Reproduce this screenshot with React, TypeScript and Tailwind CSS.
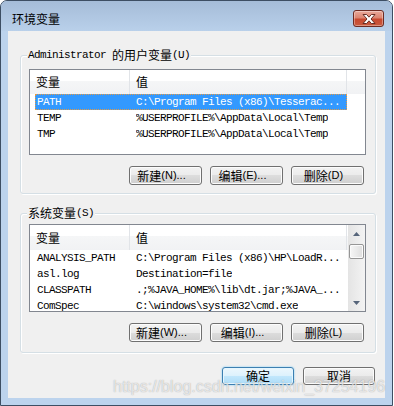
const MONO = "font-['Liberation_Mono',monospace] text-[11px] tracking-[-0.6px] leading-none";
const CJK = "font-['Noto_Sans_CJK_SC',sans-serif] text-[12px] leading-none";
const SANS = "font-['Liberation_Sans',sans-serif] text-[11px] leading-none";

type Row = [string, string];

const userVars: Row[] = [
  ['PATH', 'C:\\Program Files (x86)\\Tesserac...'],
  ['TEMP', '%USERPROFILE%\\AppData\\Local\\Temp'],
  ['TMP', '%USERPROFILE%\\AppData\\Local\\Temp'],
];

const sysVars: Row[] = [
  ['ANALYSIS_PATH', 'C:\\Program Files (x86)\\HP\\LoadR...'],
  ['asl.log', 'Destination=file'],
  ['CLASSPATH', '.;%JAVA_HOME%\\lib\\dt.jar;%JAVA_...'],
  ['ComSpec', 'C:\\windows\\system32\\cmd.exe'],
];

function CloseButton() {
  return (
    <div className="mt-[9px] w-[31px] h-[17px] rounded-[3px] border border-[#6e2b22] bg-[linear-gradient(to_bottom,#e9a99b_0%,#dc8571_45%,#c8482f_55%,#c95a3e_100%)] shadow-[inset_0_0_0_1px_rgba(255,255,255,0.35)] flex items-center justify-center">
      <svg width="14" height="10" viewBox="0 0 14 10">
        <polygon
          points="1,0.5 4.6,0.5 7,3.2 9.4,0.5 13,0.5 9,5 13,9.5 9.4,9.5 7,6.8 4.6,9.5 1,9.5 5,5"
          fill="#ffffff"
          stroke="#5a2119"
          strokeWidth="0.9"
          strokeLinejoin="round"
        />
      </svg>
    </div>
  );
}

function Scrollbar() {
  return (
    <div className="w-[17px] shrink-0 flex flex-col bg-[linear-gradient(to_right,#e4e4e4,#f3f3f3)]">
      <div className="h-[17px] shrink-0 flex items-center justify-center">
        <svg width="7" height="4" viewBox="0 0 7 4">
          <path d="M3.5 0L7 4H0z" fill="#56657a" />
        </svg>
      </div>
      <div className="mt-[2px] mx-[1px] h-[15px] shrink-0 rounded-[2px] border border-[#969696] bg-[linear-gradient(to_right,#f6f6f6,#dedede)] shadow-[inset_0_0_0_1px_#fbfbfb]" />
      <div className="flex-1" />
      <div className="h-[17px] shrink-0 flex items-center justify-center">
        <svg width="7" height="4" viewBox="0 0 7 4">
          <path d="M0 0H7L3.5 4z" fill="#56657a" />
        </svg>
      </div>
    </div>
  );
}

function ListView({
  rows,
  selected,
  scroll,
  height,
  headH,
}: {
  rows: Row[];
  selected?: number;
  scroll?: boolean;
  height: string;
  headH: string;
}) {
  return (
    <div className={`w-full ${height} flex border border-[#828790] bg-white overflow-hidden`}>
      <div className="flex-1 min-w-0 flex flex-col">
        <div className={`${headH} shrink-0 flex bg-[linear-gradient(to_bottom,#ffffff_0%,#ffffff_45%,#f5f6f7_45%,#f1f2f4_100%)]`}>
          <div className={`w-[100px] shrink-0 border-r border-[#e1e4e8] pl-[6px] flex items-center ${CJK}`}>变量</div>
          <div className={`w-[217px] shrink-0 border-r border-[#e1e4e8] pl-[6px] flex items-center ${CJK}`}>值</div>
        </div>
        {rows.map(([name, value], i) => (
          <div
            key={name}
            className={`ml-[5px] w-[312px] h-[16px] shrink-0 flex items-center whitespace-nowrap ${MONO} ${
              i === selected
                ? 'bg-[#3399ff] text-white outline-1 outline-dotted outline-[#e39a45] -outline-offset-1'
                : 'text-black'
            }`}
          >
            <span className="w-[101px] shrink-0 pl-[2px]">{name}</span>
            <span className="overflow-hidden">{value}</span>
          </div>
        ))}
      </div>
      {scroll && <Scrollbar />}
    </div>
  );
}

function Btn({
  zh,
  hot,
  dots,
  focused,
  w = 'w-[73px]',
  h = 'h-[19px]',
}: {
  zh: string;
  hot?: string;
  dots?: boolean;
  focused?: boolean;
  w?: string;
  h?: string;
}) {
  const look = focused
    ? 'border-[#3c7fb1] bg-[linear-gradient(to_bottom,#ecf7fd_0%,#dcf1fc_50%,#c2e7fc_50%,#aedcf6_100%)] shadow-[0_0_2px_#6fc8f8,inset_0_0_0_1px_#e6f6fe]'
    : 'border-[#707070] bg-[linear-gradient(to_bottom,#f3f3f3_0%,#ebebeb_50%,#dddddd_50%,#cfcfcf_100%)] shadow-[inset_0_0_0_1px_#fcfcfc]';
  return (
    <div className={`${w} ${h} shrink-0 rounded-[3px] border flex items-center justify-center ${hot ? 'pr-[8px]' : ''} ${look}`}>
      <span className={`${CJK} text-black`}>{zh}</span>
      {hot && (
        <span className={`${SANS} text-black`}>
          ({hot}){dots ? '...' : ''}
        </span>
      )}
    </div>
  );
}

function Group({
  label,
  height,
  pt,
  children,
}: {
  label: React.ReactNode;
  height: string;
  pt: string;
  children: React.ReactNode;
}) {
  return (
    <div
      className={`relative ml-[12px] w-[356px] ${height} ${pt} shrink-0 rounded-[3px] border border-[#d5dfe5] shadow-[inset_1px_1px_0_#ffffff,1px_1px_0_#ffffff] flex flex-col pl-[8px] pr-[9px]`}
    >
      <div className="absolute -top-[9px] left-[6px] h-[16px] px-[1px] bg-[#f0f0f0] flex items-center text-black">
        {label}
      </div>
      {children}
    </div>
  );
}

export default function App() {
  return (
    <div className="relative w-[394px] h-[406px] bg-white overflow-hidden">
      <div className="w-[393px] h-[406px] border border-[#3d4e63] rounded-t-[7px] bg-[#bcd3ed] flex flex-col">
        {/* title bar */}
        <div className="h-[30px] shrink-0 rounded-t-[6px] bg-[linear-gradient(to_bottom,#a5bcd8,#b9d0ea)] flex items-start justify-between pl-[11px] pr-[8px]">
          <span className={`${CJK} mt-[10px] h-[16px] flex items-center text-black`}>环境变量</span>
          <CloseButton />
        </div>

        {/* client area */}
        <div className="ml-[7px] w-[377px] h-[367px] shrink-0 bg-[#f0f0f0] flex flex-col">
          <div className="mt-[24px]">
            <Group
              height="h-[139px]"
              pt="pt-[13px]"
              label={
                <>
                  <span className={MONO}>Administrator&nbsp;</span>
                  <span className={CJK}>的用户变量</span>
                  <span className={MONO}>(U)</span>
                </>
              }
            >
              <ListView rows={userVars} selected={0} height="h-[86px]" headH="h-[24px]" />
              <div className="mt-[11px] pr-[2px] flex justify-end gap-[8px]">
                <Btn zh="新建" hot="N" dots />
                <Btn zh="编辑" hot="E" dots />
                <Btn zh="删除" hot="D" />
              </div>
            </Group>
          </div>

          <div className="mt-[19px]">
            <Group
              height="h-[140px]"
              pt="pt-[10px]"
              label={
                <>
                  <span className={CJK}>系统变量</span>
                  <span className={MONO}>(S)</span>
                </>
              }
            >
              <ListView rows={sysVars} scroll height="h-[88px]" headH="h-[25px]" />
              <div className="mt-[11px] pr-[2px] flex justify-end gap-[8px]">
                <Btn zh="新建" hot="W" dots />
                <Btn zh="编辑" hot="I" dots />
                <Btn zh="删除" hot="L" />
              </div>
            </Group>
          </div>

          <div className="mt-[14px] pr-[10px] flex justify-end gap-[9px]">
            <Btn zh="确定" focused w="w-[72px]" h="h-[18px]" />
            <Btn zh="取消" w="w-[72px]" h="h-[18px]" />
          </div>
        </div>
      </div>

      {/* watermark */}
      <div className="absolute left-[113px] top-[378px] font-['Liberation_Sans',sans-serif] text-[16px] leading-[18px] text-white/70 [text-shadow:0_0_1px_rgba(90,90,90,0.55)] whitespace-nowrap pointer-events-none">
        https://blog.csdn.net/weixin_37254196
      </div>
    </div>
  );
}
